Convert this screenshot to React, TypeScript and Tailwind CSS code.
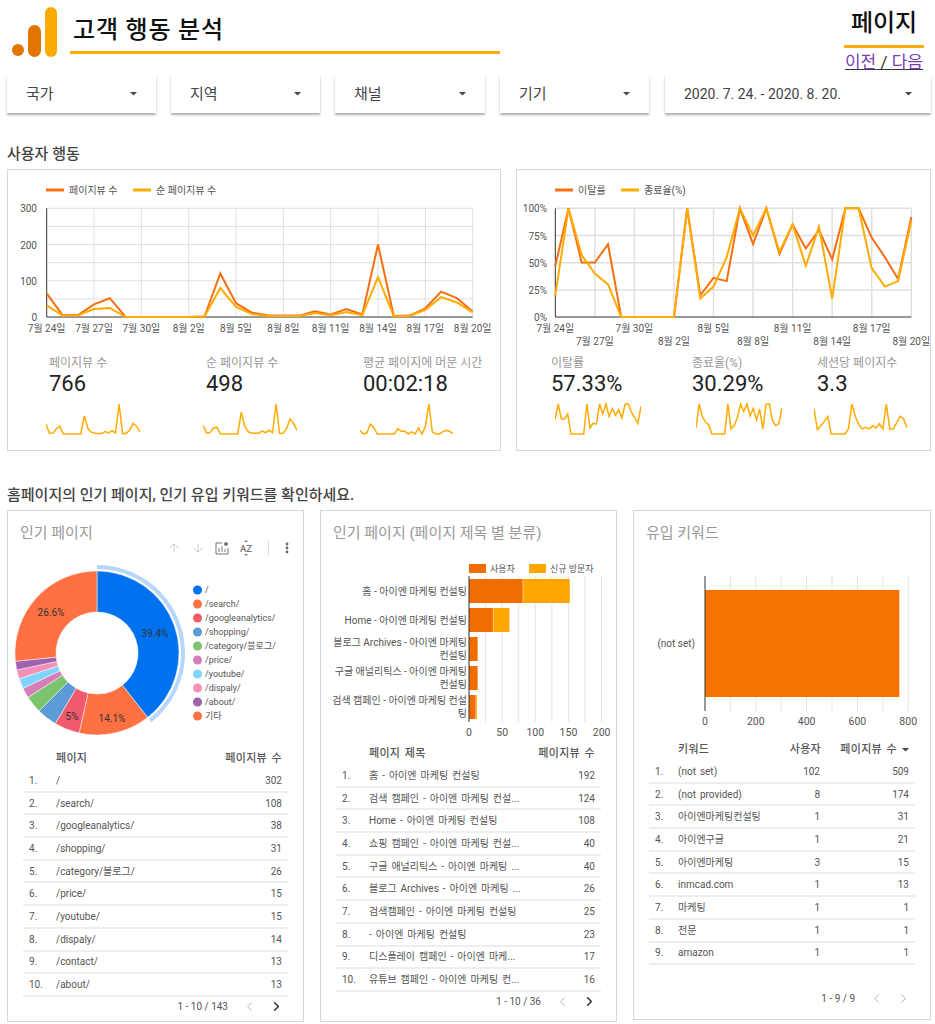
import React from "react";
import { ArrowDown, ArrowUp, ChevronLeft, ChevronRight } from "lucide-react";

const DARK = "#f76f10";
const AMBER = "#ffab00";

const views = [65, 5, 6, 35, 52, 0, 0, 0, 0, 0, 1, 120, 38, 12, 5, 4, 4, 16, 7, 22, 7, 200, 3, 4, 24, 70, 52, 15];
const uniques = [32, 4, 5, 22, 25, 0, 0, 0, 0, 0, 1, 80, 28, 8, 3, 3, 3, 11, 5, 14, 5, 110, 2, 3, 20, 55, 40, 13];
const bounce = [47, 100, 50, 50, 67, 0, 0, 0, 0, 0, 100, 20, 36, 33, 100, 67, 100, 58, 85, 63, 80, 53, 100, 100, 73, 55, 35, 92];
const exitRate = [20, 100, 57, 40, 30, 0, 0, 0, 0, 0, 100, 17, 28, 55, 100, 75, 100, 60, 85, 47, 83, 17, 100, 100, 45, 28, 33, 88];
const avgTime = [12, 0, 3, 33, 22, 0, 0, 0, 0, 0, 0, 17, 9, 9, 0, 7, 0, 20, 0, 25, 100, 7, 0, 0, 7, 12, 9, 1];
const pagesPerSession = [84, 14, 28, 42, 58, 0, 0, 0, 0, 0, 17, 100, 59, 31, 17, 22, 17, 28, 20, 34, 17, 100, 17, 17, 37, 59, 51, 20];

const points = (data: number[], x0: number, x1: number, top: number, bottom: number, max: number) =>
  data
    .map((v, i) => {
      const x = x0 + ((x1 - x0) * i) / (data.length - 1);
      const y = bottom - ((bottom - top) * v) / max;
      return `${x.toFixed(1)},${y.toFixed(1)}`;
    })
    .join(" ");

const Caret = () => (
  <svg width="7" height="4" viewBox="0 0 7 4" className="shrink-0">
    <polygon points="0,0 7,0 3.5,3.5" fill="#444" />
  </svg>
);

const Filter = ({ label, width, size }: { label: string; width: string; size: string }) => (
  <div className={`${width} ${size} h-[38px] bg-white flex items-center justify-between pl-[19px] pr-[19px] text-[#444] shadow-[0_2px_2px_rgba(0,0,0,0.32)]`}>
    <span>{label}</span>
    <Caret />
  </div>
);

const Legend = ({ x, items }: { x: number[]; items: string[] }) => (
  <g fontSize="10" fill="#555">
    <line x1={x[0]} x2={x[0] + 18} y1="190" y2="190" stroke={DARK} strokeWidth="3" />
    <text x={x[0] + 23} y="194">{items[0]}</text>
    <line x1={x[1]} x2={x[1] + 18} y1="190" y2="190" stroke={AMBER} strokeWidth="3" />
    <text x={x[1] + 23} y="194">{items[1]}</text>
  </g>
);

const dateLabels = ["7월 24일", "7월 27일", "7월 30일", "8월 2일", "8월 5일", "8월 8일", "8월 11일", "8월 14일", "8월 17일", "8월 20일"];

const ViewsChart = () => {
  const x0 = 46.7;
  const x1 = 472.7;
  const top = 208.3;
  const bottom = 317;
  return (
    <svg width="492" height="178" viewBox="8 170 492 178" className="block">
      <Legend x={[46, 133]} items={["페이지뷰 수", "순 페이지뷰 수"]} />
      {[0, 1, 2, 3, 4, 5].map((i) => (
        <line key={i} x1={x0} x2={x1} y1={top + (i * (bottom - top)) / 6} y2={top + (i * (bottom - top)) / 6} stroke="#e0e0e0" />
      ))}
      {dateLabels.map((l, i) => {
        const x = i === 9 ? x1 : x0 + 47.33 * i;
        return (
          <g key={l}>
            {i > 0 && <line x1={x} x2={x} y1={top} y2={bottom} stroke="#e0e0e0" />}
            <text x={x} y="332" fontSize="10" fill="#555" textAnchor="middle">{l}</text>
          </g>
        );
      })}
      {[["300", top], ["200", top + 36.2], ["100", top + 72.5], ["0", bottom]].map(([t, y]) => (
        <text key={t} x="37" y={Number(y) + 4} fontSize="10" fill="#555" textAnchor="end">{t}</text>
      ))}
      <line x1={x0} x2={x0} y1={top} y2={bottom} stroke="#333" />
      <line x1={x0} x2={x1} y1={bottom} y2={bottom} stroke="#333" />
      <polyline points={points(views, x0, x1, top, bottom, 300)} fill="none" stroke={DARK} strokeWidth="2" />
      <polyline points={points(uniques, x0, x1, top, bottom, 300)} fill="none" stroke={AMBER} strokeWidth="2" />
    </svg>
  );
};

const RateChart = () => {
  const x0 = 555.3;
  const x1 = 911.3;
  const top = 208.3;
  const bottom = 317;
  return (
    <svg width="413" height="178" viewBox="517 170 413 178" className="block">
      <Legend x={[555, 621]} items={["이탈률", "종료율(%)"]} />
      {[0, 1, 2, 3].map((i) => (
        <line key={i} x1={x0} x2={x1} y1={top + i * 27.2} y2={top + i * 27.2} stroke="#e0e0e0" strokeWidth="1.5" />
      ))}
      {dateLabels.map((l, i) => {
        const x = i === 9 ? x1 : x0 + 39.55 * i;
        return (
          <g key={l}>
            {i > 0 && <line x1={x} x2={x} y1={top} y2={bottom} stroke="#e0e0e0" strokeWidth="1.5" />}
            <text x={x} y={i % 2 === 0 ? 332 : 345} fontSize="10" fill="#555" textAnchor="middle">{l}</text>
          </g>
        );
      })}
      {["100%", "75%", "50%", "25%", "0%"].map((t, i) => (
        <text key={t} x="547" y={top + i * 27.2 + 4} fontSize="10" fill="#555" textAnchor="end">{t}</text>
      ))}
      <line x1={x0} x2={x0} y1={top} y2={bottom} stroke="#333" />
      <line x1={x0} x2={x1} y1={bottom} y2={bottom} stroke="#333" />
      <polyline points={points(bounce, x0, x1, top, bottom, 100)} fill="none" stroke={DARK} strokeWidth="2" />
      <polyline points={points(exitRate, x0, x1, top, bottom, 100)} fill="none" stroke={AMBER} strokeWidth="2" />
    </svg>
  );
};

const Score = ({ label, value, data, max, width, sparkClass }: { label: string; value: string; data: number[]; max: number; width: number; sparkClass: string }) => (
  <div className="min-w-0">
    <div className="text-[12px] leading-[16px] text-[#999] whitespace-nowrap">{label}</div>
    <div className="text-[22px] leading-[28px] text-[#222] -mt-px">{value}</div>
    <svg width={width} height="34" viewBox={`0 0 ${width} 34`} className={`block mt-[4px] ${sparkClass}`}>
      <polyline points={points(data, 0, width, 2, 32, max)} fill="none" stroke={AMBER} strokeWidth="1.5" />
    </svg>
  </div>
);

const slices = [
  { label: "/", pct: 39.4, color: "#0072f0" },
  { label: "/search/", pct: 14.1, color: "#ff7043" },
  { label: "/googleanalytics/", pct: 5, color: "#f15a6c" },
  { label: "/shopping/", pct: 4, color: "#5c9bd5" },
  { label: "/category/블로그/", pct: 3.4, color: "#7cc36d" },
  { label: "/price/", pct: 2, color: "#d57eb8" },
  { label: "/youtube/", pct: 2, color: "#80d4fb" },
  { label: "/dispaly/", pct: 1.8, color: "#f490b8" },
  { label: "/about/", pct: 1.7, color: "#9e62ae" },
  { label: "기타", pct: 26.6, color: "#ff7043" },
];

const polar = (r: number, pct: number, cx = 97, cy = 653) => {
  const a = (pct / 100) * Math.PI * 2;
  return [cx + r * Math.sin(a), cy - r * Math.cos(a)];
};

const ring = (r0: number, r1: number, from: number, to: number) => {
  const [ax, ay] = polar(r1, from);
  const [bx, by] = polar(r1, to);
  const [cx, cy] = polar(r0, to);
  const [dx, dy] = polar(r0, from);
  const large = to - from > 50 ? 1 : 0;
  return `M${ax} ${ay}A${r1} ${r1} 0 ${large} 1 ${bx} ${by}L${cx} ${cy}A${r0} ${r0} 0 ${large} 0 ${dx} ${dy}Z`;
};

const Donut = () => {
  let acc = 0;
  return (
    <svg width="295" height="188" viewBox="8 560 295 188" className="block">
      <path d={ring(84, 88, 0, 39.4)} fill="#b6d6fb" />
      {slices.map((s) => {
        const d = ring(41, 82, acc, acc + s.pct);
        acc += s.pct;
        return <path key={s.label} d={d} fill={s.color} stroke="#fff" strokeWidth="0.5" />;
      })}
      <g fontSize="10" fill="#333" textAnchor="middle">
        <text x="155" y="637">39.4%</text>
        <text x="112" y="722">14.1%</text>
        <text x="72" y="720">5%</text>
        <text x="51" y="616">26.6%</text>
      </g>
      {slices.map((s, i) => (
        <g key={s.label}>
          <circle cx="197.5" cy={590 + i * 14} r="4.5" fill={s.color} />
          <text x="205" y={593 + i * 14} fontSize="9" fill="#555">{s.label}</text>
        </g>
      ))}
    </svg>
  );
};

const StackedBars = () => {
  const x0 = 469;
  const scale = 0.663;
  const bars = [
    { y: 579, a: 81, b: 71, lines: ["홈 - 아이엔 마케팅 컨설팅"] },
    { y: 608, a: 36, b: 25, lines: ["Home - 아이엔 마케팅 컨설팅"] },
    { y: 637, a: 13, b: 0, lines: ["블로그 Archives - 아이엔 마케팅", "컨설팅"] },
    { y: 666, a: 13, b: 0, lines: ["구글 애널리틱스 - 아이엔 마케팅", "컨설팅"] },
    { y: 695, a: 10, b: 2, lines: ["검색 캠페인 - 아이엔 마케팅 컨설", "팅"] },
  ];
  return (
    <svg width="295" height="195" viewBox="321 548 295 195" className="block">
      <rect x="469" y="564" width="17" height="9" fill="#f26d00" />
      <text x="490" y="572" fontSize="9" fill="#555">사용자</text>
      <rect x="529" y="564" width="17" height="9" fill="#ffa600" />
      <text x="550" y="572" fontSize="9" fill="#555">신규 방문자</text>
      {[1, 2, 3, 4, 5, 6, 7, 8].map((i) => (
        <line key={i} x1={x0 + i * 25 * scale} x2={x0 + i * 25 * scale} y1="576" y2="722" stroke="#e4e4e4" />
      ))}
      {bars.map((b) => (
        <g key={b.y}>
          <rect x={x0} y={b.y} width={b.a * scale} height="24" fill="#f26d00" />
          <rect x={x0 + b.a * scale + 0.5} y={b.y} width={Math.max(b.b * scale - 0.5, 0)} height="24" fill="#ffa600" />
          {b.lines.map((l, i) => (
            <text key={l} x="467" y={b.y + (b.lines.length === 1 ? 16 : 9 + i * 13)} fontSize="10" fill="#555" textAnchor="end">{l}</text>
          ))}
        </g>
      ))}
      <line x1={x0} x2={x0} y1="576" y2="722" stroke="#333" />
      {[0, 50, 100, 150, 200].map((t) => (
        <text key={t} x={x0 + t * scale} y="736" fontSize="10.5" fill="#555" textAnchor="middle">{t}</text>
      ))}
    </svg>
  );
};

const KeywordBar = () => {
  const x0 = 705;
  const scale = 0.254;
  return (
    <svg width="296" height="191" viewBox="634 548 296 191" className="block">
      {[1, 2, 3, 4, 5, 6, 7, 8].map((i) => (
        <line key={i} x1={x0 + i * 100 * scale} x2={x0 + i * 100 * scale} y1="576" y2="711" stroke="#e4e4e4" />
      ))}
      <rect x={x0} y="590" width={765 * scale} height="107" fill="#f57200" />
      <line x1={x0} x2={x0} y1="576" y2="711" stroke="#333" />
      <text x="695" y="647" fontSize="10" fill="#555" textAnchor="end">(not set)</text>
      {[0, 200, 400, 600, 800].map((t) => (
        <text key={t} x={x0 + t * scale} y="725" fontSize="10.5" fill="#555" textAnchor="middle">{t}</text>
      ))}
    </svg>
  );
};

const Pager = ({ text, active }: { text: string; active: boolean }) => (
  <div className="h-[20px] flex items-center justify-end text-[10px] text-[#555] [word-spacing:0]">
    <span>{text}</span>
    <ChevronLeft size={15} strokeWidth={1.5} className="ml-[14px] text-[#aaa]" />
    <ChevronRight size={15} strokeWidth={active ? 2.5 : 1.5} className={`ml-[12px] ${active ? "text-[#333]" : "text-[#aaa]"}`} />
  </div>
);

const PageTable = ({ head, rows, footer, nameWidth }: { head: string[]; rows: string[][]; footer: string; nameWidth: string }) => (
  <div className="mx-[15px] text-[10px] text-[#555] [word-spacing:1.5px]">
    <div className="h-[22px] flex items-center pl-[33px] pr-[6px] justify-between text-[11px] font-medium tracking-[0.3px]">
      <span>{head[0]}</span>
      <span>{head[1]}</span>
    </div>
    {rows.map((r, i) => (
      <div key={i} className="h-[22.7px] flex items-center pl-[6px] pr-[6px] border-b-2 border-[#eeeeee]">
        <span className="w-[27px] shrink-0">{i + 1}.</span>
        <span className={`${nameWidth} truncate`}>{r[0]}</span>
        <span className="ml-auto">{r[1]}</span>
      </div>
    ))}
    <div className="pr-[4px]">
      <Pager text={footer} active />
    </div>
  </div>
);

const pageRows = [
  ["/", "302"], ["/search/", "108"], ["/googleanalytics/", "38"], ["/shopping/", "31"], ["/category/블로그/", "26"],
  ["/price/", "15"], ["/youtube/", "15"], ["/dispaly/", "14"], ["/contact/", "13"], ["/about/", "13"],
];

const titleRows = [
  ["홈 - 아이엔 마케팅 컨설팅", "192"], ["검색 캠페인 - 아이엔 마케팅 컨설...", "124"], ["Home - 아이엔 마케팅 컨설팅", "108"],
  ["쇼핑 캠페인 - 아이엔 마케팅 컨설...", "40"], ["구글 애널리틱스 - 아이엔 마케팅 ...", "40"], ["블로그 Archives - 아이엔 마케팅 ...", "26"],
  ["검색캠페인 - 아이엔 마케팅 컨설팅", "25"], [" - 아이엔 마케팅 컨설팅", "23"], ["디스플레이 캠페인 - 아이엔 마케...", "17"], ["유튜브 캠페인 - 아이엔 마케팅 컨...", "16"],
];

const keywordRows = [
  ["(not set)", "102", "509"], ["(not provided)", "8", "174"], ["아이엔마케팅컨설팅", "1", "31"], ["아이엔구글", "1", "21"], ["아이엔마케팅", "3", "15"],
  ["inmcad.com", "1", "13"], ["마케팅", "1", "1"], ["전문", "1", "1"], ["amazon", "1", "1"],
];

const Toolbar = () => (
  <div className="h-[16px] -mt-[4px] mb-[4px] flex items-center text-[#c4c4c4] pl-[159px]">
    <ArrowUp size={14} strokeWidth={1.5} />
    <ArrowDown size={14} strokeWidth={1.5} className="ml-[10px]" />
    <svg width="14" height="14" viewBox="0 0 14 14" className="ml-[10px] text-[#777]" fill="none" stroke="currentColor">
      <path d="M7 2H1v11h12V7" />
      <path d="M4 11V7M7 11V5M10 11V8" />
      <circle cx="11" cy="3" r="1.5" fill="currentColor" />
    </svg>
    <svg width="12" height="16" viewBox="0 0 12 16" className="ml-[11px] text-[#777]" fill="currentColor">
      <polygon points="6,0 8,2 4,2" />
      <text x="6" y="12" fontSize="9.5" fontWeight="500" textAnchor="middle">AZ</text>
      <polygon points="6,16 8,14 4,14" />
    </svg>
    <span className="ml-[16px] w-px h-[15px] bg-[#ddd]" />
    <svg width="4" height="12" viewBox="0 0 4 12" className="ml-[16px] text-[#666]" fill="currentColor">
      <circle cx="2" cy="2" r="1.4" />
      <circle cx="2" cy="6" r="1.4" />
      <circle cx="2" cy="10" r="1.4" />
    </svg>
  </div>
);

const CardTitle = ({ children }: { children: React.ReactNode }) => (
  <div className="pl-[12px] pt-[11px] h-[33px] text-[15px] leading-[22px] text-[#999] whitespace-nowrap">{children}</div>
);

export default function App() {
  return (
    <div className="w-[935px] h-[1024px] bg-white overflow-hidden font-['Roboto','Noto_Sans_CJK_KR',sans-serif]">
      <header className="h-[75px] flex justify-between">
        <div className="flex">
          <svg width="46" height="50" viewBox="0 0 46 50" className="ml-[12px] mt-[7px]">
            <circle cx="6" cy="43" r="6" fill="#e37400" />
            <rect x="16" y="18" width="13" height="32" rx="6.5" fill="#e37400" />
            <rect x="33" y="0" width="12" height="50" rx="6" fill="#f9ab00" />
          </svg>
          <div className="ml-[12px] w-[430px] h-[54px] border-b-[3px] border-[#ffab00] pl-[3px] pt-[14px] text-[24px] leading-[32px] font-medium text-[#111] tracking-[0.8px]">
            고객 행동 분석
          </div>
        </div>
        <div className="w-[80px] mr-[11px] flex flex-col items-center">
          <div className="w-full h-[48px] border-b-[3px] border-[#ffab00] pt-[7px] text-center text-[24px] leading-[32px] font-medium text-[#111] whitespace-nowrap">페이지</div>
          <div className="mt-[3px] text-[17px] leading-[22px] text-[#333] underline whitespace-nowrap">
            <span className="text-[#7b3fb5]">이전</span> / <span className="text-[#7b3fb5]">다음</span>
          </div>
        </div>
      </header>

      <div className="flex gap-[15px] pl-[7px]">
        <Filter label="국가" width="w-[149px]" size="text-[15px]" />
        <Filter label="지역" width="w-[149px]" size="text-[15px]" />
        <Filter label="채널" width="w-[150px]" size="text-[15px]" />
        <Filter label="기기" width="w-[149px]" size="text-[15px]" />
        <Filter label="2020. 7. 24. - 2020. 8. 20." width="w-[266px] ml-px" size="text-[14px]" />
      </div>

      <h2 className="mt-[31px] ml-[7px] text-[15px] leading-[20px] font-medium text-[#444]">사용자 행동</h2>

      <div className="mt-[5px] flex pl-[7px] gap-[15px]">
        <section className="w-[494px] h-[282px] border border-[#d8d8d8]">
          <ViewsChart />
          <div className="grid grid-cols-[157px_157px_1fr] pl-[41px] pt-[7px]">
            <Score label="페이지뷰 수" value="766" data={views} max={200} width={94} sparkClass="-ml-[3px]" />
            <Score label="순 페이지뷰 수" value="498" data={uniques} max={110} width={94} sparkClass="-ml-[3px]" />
            <Score label="평균 페이지에 머문 시간" value="00:02:18" data={avgTime} max={100} width={93} sparkClass="-ml-[3px]" />
          </div>
        </section>
        <section className="w-[415px] h-[282px] border border-[#d8d8d8]">
          <RateChart />
          <div className="grid grid-cols-[141px_125px_1fr] pl-[34px] pt-[7px]">
            <Score label="이탈률" value="57.33%" data={bounce} max={100} width={86} sparkClass="ml-[4px]" />
            <Score label="종료율(%)" value="30.29%" data={exitRate} max={100} width={86} sparkClass="ml-[4px]" />
            <Score label="세션당 페이지수" value="3.3" data={pagesPerSession} max={100} width={93} sparkClass="-ml-[3px]" />
          </div>
        </section>
      </div>

      <h2 className="mt-[34px] ml-[7px] text-[15px] leading-[20px] font-medium text-[#444]">홈페이지의 인기 페이지, 인기 유입 키워드를 확인하세요.</h2>

      <div className="mt-[5px] flex pl-[7px] gap-[16px] items-start">
        <section className="w-[297px] h-[512px] border border-[#d8d8d8]">
          <CardTitle>인기 페이지</CardTitle>
          <Toolbar />
          <Donut />
          <PageTable head={["페이지", "페이지뷰 수"]} rows={pageRows} footer="1 - 10 / 143" nameWidth="w-[190px]" />
        </section>
        <section className="w-[297px] h-[512px] border border-[#d8d8d8]">
          <CardTitle>인기 페이지 (페이지 제목 별 분류)</CardTitle>
          <div className="h-[4px]" />
          <StackedBars />
          <PageTable head={["페이지 제목", "페이지뷰 수"]} rows={titleRows} footer="1 - 10 / 36" nameWidth="w-[190px]" />
        </section>
        <section className="w-[298px] h-[510px] border border-[#d8d8d8]">
          <CardTitle>유입 키워드</CardTitle>
          <div className="h-[4px]" />
          <KeywordBar />
          <div className="mx-[15px] text-[10px] text-[#555] [word-spacing:1.5px]">
            <div className="h-[22px] flex items-center pl-[29px] text-[11px] font-medium tracking-[0.3px]">
              <span>키워드</span>
              <span className="ml-auto w-[50px] text-right">사용자</span>
              <span className="ml-[16px] w-[60px] text-right whitespace-nowrap">페이지뷰 수</span>
              <span className="ml-[5px] mr-[6px]"><Caret /></span>
            </div>
            {keywordRows.map((r, i) => (
              <div key={r[0]} className="h-[22.7px] flex items-center px-[6px] border-b-2 border-[#eeeeee]">
                <span className="w-[23px] shrink-0">{i + 1}.</span>
                <span>{r[0]}</span>
                <span className="ml-auto w-[40px] text-right">{r[1]}</span>
                <span className="ml-[49px] w-[40px] text-right">{r[2]}</span>
              </div>
            ))}
            <div className="mt-[23px] pr-[4px]">
              <Pager text="1 - 9 / 9" active={false} />
            </div>
          </div>
        </section>
      </div>
    </div>
  );
}
